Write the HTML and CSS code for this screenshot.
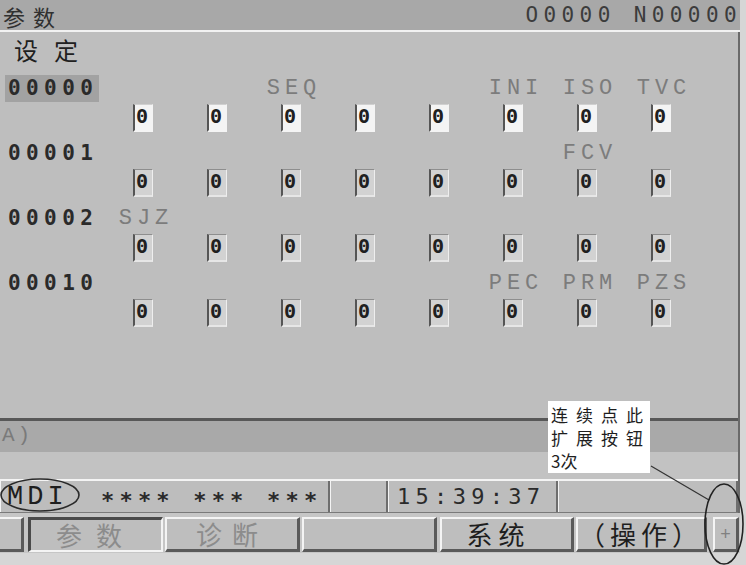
FILE: index.html
```html
<!DOCTYPE html>
<html lang="zh-CN">
<head>
    <meta charset="UTF-8">
    <meta name="viewport" content="width=device-width, initial-scale=1.0">
    <title>参数 设定</title>
    <link rel="stylesheet" href="styles.css">
</head>
<body>
    <div class="screen">
        <!-- Title bar -->
        <div class="topbar">
            <span class="title">参数</span>
            <span class="prog">O0000 N00000</span>
        </div>

        <div class="frame">
            <div class="panel">
                <div class="subtitle">设定</div>

                <!-- 00000 -->
                <div class="param">
                    <div class="name-line">
                        <span class="pno-cell"><span class="pno selected">00000</span></span>
                        <span class="bit"></span><span class="bit"></span><span class="bit">SEQ</span><span class="bit"></span>
                        <span class="bit"></span><span class="bit">INI</span><span class="bit">ISO</span><span class="bit">TVC</span>
                    </div>
                    <div class="box-line first">
                        <span></span>
                        <span class="cell"><span class="val">0</span></span><span class="cell"><span class="val">0</span></span>
                        <span class="cell"><span class="val">0</span></span><span class="cell"><span class="val">0</span></span>
                        <span class="cell"><span class="val">0</span></span><span class="cell"><span class="val">0</span></span>
                        <span class="cell"><span class="val">0</span></span><span class="cell"><span class="val">0</span></span>
                    </div>
                </div>

                <!-- 00001 -->
                <div class="param">
                    <div class="name-line">
                        <span class="pno-cell"><span class="pno">00001</span></span>
                        <span class="bit"></span><span class="bit"></span><span class="bit"></span><span class="bit"></span>
                        <span class="bit"></span><span class="bit"></span><span class="bit">FCV</span><span class="bit"></span>
                    </div>
                    <div class="box-line">
                        <span></span>
                        <span class="cell"><span class="val">0</span></span><span class="cell"><span class="val">0</span></span>
                        <span class="cell"><span class="val">0</span></span><span class="cell"><span class="val">0</span></span>
                        <span class="cell"><span class="val">0</span></span><span class="cell"><span class="val">0</span></span>
                        <span class="cell"><span class="val">0</span></span><span class="cell"><span class="val">0</span></span>
                    </div>
                </div>

                <!-- 00002 -->
                <div class="param">
                    <div class="name-line">
                        <span class="pno-cell"><span class="pno">00002</span></span>
                        <span class="bit">SJZ</span><span class="bit"></span><span class="bit"></span><span class="bit"></span>
                        <span class="bit"></span><span class="bit"></span><span class="bit"></span><span class="bit"></span>
                    </div>
                    <div class="box-line">
                        <span></span>
                        <span class="cell"><span class="val">0</span></span><span class="cell"><span class="val">0</span></span>
                        <span class="cell"><span class="val">0</span></span><span class="cell"><span class="val">0</span></span>
                        <span class="cell"><span class="val">0</span></span><span class="cell"><span class="val">0</span></span>
                        <span class="cell"><span class="val">0</span></span><span class="cell"><span class="val">0</span></span>
                    </div>
                </div>

                <!-- 00010 -->
                <div class="param">
                    <div class="name-line">
                        <span class="pno-cell"><span class="pno">00010</span></span>
                        <span class="bit"></span><span class="bit"></span><span class="bit"></span><span class="bit"></span>
                        <span class="bit"></span><span class="bit">PEC</span><span class="bit">PRM</span><span class="bit">PZS</span>
                    </div>
                    <div class="box-line">
                        <span></span>
                        <span class="cell"><span class="val">0</span></span><span class="cell"><span class="val">0</span></span>
                        <span class="cell"><span class="val">0</span></span><span class="cell"><span class="val">0</span></span>
                        <span class="cell"><span class="val">0</span></span><span class="cell"><span class="val">0</span></span>
                        <span class="cell"><span class="val">0</span></span><span class="cell"><span class="val">0</span></span>
                    </div>
                </div>
            </div>

            <!-- Key-in line -->
            <div class="cmdline">A)</div>
            <div class="spacer"></div>

            <!-- Status line -->
            <div class="status">
                <div class="st-mode"><span class="mdi">MDI</span><span class="stars">**** *** ***</span></div>
                <div class="st-blank"></div>
                <div class="st-time">15:39:37</div>
                <div class="st-rest"></div>
            </div>
        </div>

        <!-- Soft keys -->
        <div class="softkeys">
            <div class="key key-back"></div>
            <div class="key pressed dim">参数</div>
            <div class="key diag dim">诊断</div>
            <div class="key"></div>
            <div class="key sys">系统</div>
            <div class="key op">（操作）</div>
            <div class="key key-plus">+</div>
        </div>
    </div>

    <!-- Annotation -->
    <div class="callout">连续点此<br>扩展按钮<br><span class="tight">3</span>次</div>
    <svg class="marks" width="746" height="565" viewBox="0 0 746 565">
        <ellipse cx="40" cy="495" rx="39" ry="16" fill="none" stroke="#2a2a2a" stroke-width="1.6"/>
        <line x1="651" y1="466" x2="709" y2="500" stroke="#333" stroke-width="1.2"/>
        <ellipse cx="724" cy="524" rx="19" ry="40" fill="none" stroke="#222" stroke-width="1.6"/>
    </svg>
</body>
</html>
```

FILE: styles.css
```css
body {
    margin: 0;
    width: 746px;
    height: 565px;
    overflow: hidden;
    position: relative;
    background: #d6d6d6;
    font-family: "DejaVu Sans Mono", "Liberation Mono", monospace;
}

.screen {
    width: 740px;
}

/* Title bar */
.topbar {
    height: 28px;
    padding-top: 2px;
    background: #a8a8a8;
    border-bottom: 2px solid #f2f2f2;
    display: flex;
    justify-content: space-between;
    align-items: center;
}

.title {
    font-family: "Noto Sans CJK SC", sans-serif;
    font-size: 22px;
    line-height: 28px;
    letter-spacing: 8px;
    color: #303030;
    padding-left: 3px;
}

.prog {
    font-size: 21px;
    letter-spacing: 5.4px;
    color: #3c3c3c;
    margin-right: -2px;
    margin-top: -2px;
}

/* Main frame */
.frame {
    background: #bebebe;
    border-right: 2px solid #6a6a6a;
}

.panel {
    height: 386px;
}

.subtitle {
    height: 41px;
    box-sizing: border-box;
    padding: 3px 0 0 14px;
    font-family: "Noto Sans CJK SC", sans-serif;
    font-size: 24px;
    line-height: 30px;
    letter-spacing: 16px;
    color: #202020;
}

.name-line,
.box-line {
    display: grid;
    grid-template-columns: 106px repeat(8, 74px);
}

.name-line {
    height: 30px;
    align-items: center;
}

.box-line {
    height: 35px;
}

.pno-cell {
    padding-left: 5px;
}

.pno {
    display: inline-block;
    height: 27px;
    line-height: 27px;
    padding: 0 1px 0 3px;
    font-size: 21px;
    font-weight: bold;
    letter-spacing: 5.4px;
    color: #2a2a2a;
}

.pno.selected {
    background: #a2a2a2;
}

.bit {
    text-align: center;
    font-family: "Liberation Mono", monospace;
    font-size: 22px;
    letter-spacing: 5px;
    color: #7c7c7c;
    padding-left: 6px;
}

.cell {
    display: flex;
    justify-content: center;
    padding-top: 1px;
}

.val {
    width: 20px;
    height: 28px;
    box-sizing: border-box;
    padding-left: 1px;
    font-size: 20px;
    font-weight: bold;
    line-height: 22px;
    color: #202020;
    background: #d2d2d2;
    border-left: 2px solid #555;
    border-top: 1px solid #8e8e8e;
    border-right: 1px solid #eeeeee;
    border-bottom: 2px solid #e6e6e6;
}

.box-line.first .val {
    background: #f4f4f4;
    border-top-color: #d0d0d0;
    border-right-color: #f4f4f4;
    border-bottom-color: #f4f4f4;
}

/* Key-in line */
.cmdline {
    height: 31px;
    border-top: 3px solid #585858;
    background: #a9a9a9;
    font-family: "Liberation Mono", monospace;
    font-size: 21px;
    line-height: 30px;
    letter-spacing: 3px;
    color: #7a7a7a;
    padding-left: 2px;
}

.spacer {
    height: 27px;
    background: #c2c2c2;
}

/* Status line */
.status {
    height: 31px;
    display: flex;
    border-top: 2px solid #f4f4f4;
    border-bottom: 1px solid #7a7a7a;
    background: #bdbdbd;
}

.status > div {
    border-right: 2px solid #6e6e6e;
    border-left: 1px solid #f4f4f4;
}

.st-mode {
    width: 327px;
    display: flex;
    align-items: center;
}

.mdi {
    width: 100px;
    padding-left: 6px;
    box-sizing: border-box;
    font-family: "Liberation Mono", monospace;
    font-size: 27px;
    letter-spacing: 4px;
    line-height: 30px;
    color: #1e1e1e;
}

.stars {
    font-size: 22px;
    font-weight: bold;
    letter-spacing: 5.2px;
    color: #2a2a2a;
    padding-top: 8px;
}

.st-blank {
    width: 55px;
}

.st-time {
    width: 170px;
    padding-left: 8px;
    box-sizing: border-box;
    font-size: 22px;
    line-height: 31px;
    letter-spacing: 5.3px;
    color: #2a2a2a;
}

.st-rest {
    flex: 1;
}

/* Soft keys */
.softkeys {
    height: 36px;
    padding: 4px 0 0 0;
    display: flex;
    gap: 2px;
    background: #c6c6c6;
}

.key {
    width: 135px;
    height: 35px;
    box-sizing: border-box;
    background: #bebebe;
    border-top: 2px solid #f4f4f4;
    border-left: 2px solid #f4f4f4;
    border-right: 3px solid #5a5a5a;
    border-bottom: 3px solid #5a5a5a;
    text-align: center;
    font-family: "Noto Sans CJK SC", sans-serif;
    font-size: 26px;
    line-height: 30px;
    letter-spacing: 10px;
    padding-left: 10px;
    color: #1e1e1e;
}

.key.dim {
    color: #8c8c8c;
}

.key.pressed {
    margin-left: 2px;
    border-top: 3px solid #4a4a4a;
    border-left: 3px solid #4a4a4a;
    border-right: 2px solid #f4f4f4;
    border-bottom: 2px solid #f4f4f4;
    letter-spacing: 14px;
    padding-left: 0;
}

.key.diag {
    letter-spacing: 10px;
    padding-left: 0;
}

.key-back {
    width: 24px;
    padding: 0;
    border-left: none;
}

.key.sys {
    width: 134px;
    margin-left: 1px;
    letter-spacing: 6px;
    padding-left: 0;
    padding-right: 16px;
}

.key.op {
    width: 131px;
    letter-spacing: 5px;
    padding-left: 0;
    white-space: nowrap;
}

.key-plus {
    width: 26px;
    margin-left: 4px;
    padding: 0;
    font-family: "Liberation Sans", sans-serif;
    font-size: 18px;
    letter-spacing: 0;
    color: #808080;
}

/* Annotation */
.callout {
    position: absolute;
    left: 548px;
    top: 401px;
    width: 102px;
    height: 72px;
    box-sizing: border-box;
    padding: 2px 0 0 3px;
    background: #ffffff;
    font-family: "Noto Sans CJK SC", sans-serif;
    font-size: 17px;
    line-height: 23px;
    letter-spacing: 8px;
    color: #1e1e1e;
    white-space: nowrap;
}

.tight {
    letter-spacing: 0;
}

.marks {
    position: absolute;
    left: 0;
    top: 0;
    pointer-events: none;
}
```
